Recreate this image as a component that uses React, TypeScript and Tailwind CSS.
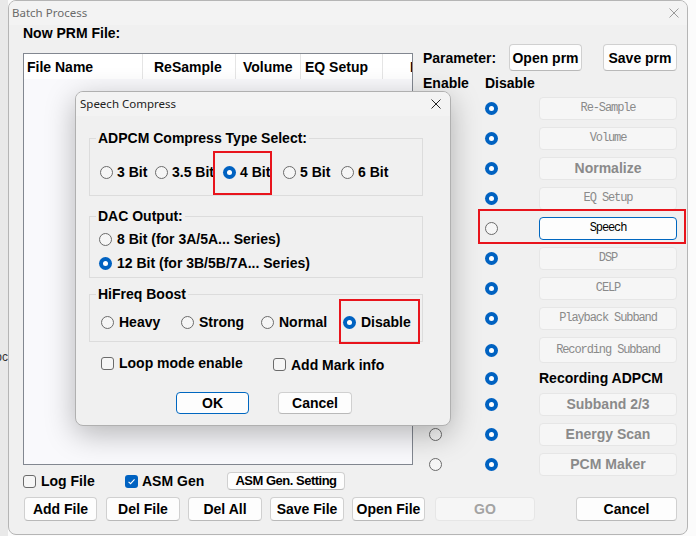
import React from "react";

type Kids = { children?: React.ReactNode };

function Radio({ checked }: { checked?: boolean }) {
  if (checked)
    return (
      <span className="w-[13px] h-[13px] rounded-full bg-[#0062c1] flex items-center justify-center shrink-0">
        <span className="w-[5px] h-[5px] rounded-full bg-white" />
      </span>
    );
  return <span className="w-[13px] h-[13px] rounded-full border border-[#6b6b6b] bg-[#f6f6f6] shrink-0" />;
}

function Check({ checked }: { checked?: boolean }) {
  if (checked)
    return (
      <span className="w-[13px] h-[13px] rounded-[3px] bg-[#0062c1] flex items-center justify-center shrink-0">
        <svg width="11" height="11" viewBox="0 0 12 12">
          <path d="M2.8 6.3l2.2 2.1 4.3-4.7" stroke="white" strokeWidth="1.2" fill="none" />
        </svg>
      </span>
    );
  return <span className="w-[13px] h-[13px] rounded-[3px] border border-[#6b6b6b] bg-[#f6f6f6] shrink-0" />;
}

function CloseX({ color }: { color: string }) {
  return (
    <svg width="10" height="10" viewBox="0 0 10 10" style={{ color }}>
      <path d="M0.5 0.5l9 9M9.5 0.5l-9 9" stroke="currentColor" strokeWidth="1" />
    </svg>
  );
}

function Btn({ children, className = "", disabled, focus }: Kids & { className?: string; disabled?: boolean; focus?: boolean }) {
  let look = "bg-[#fdfdfd] border-[#d0d0d0] border-b-[#b9b9b9] text-black";
  if (disabled) look = "bg-[#f6f6f6] border-[#e6e6e6] text-[#8a8a8a]";
  if (focus) look = "bg-[#fdfdfd] border-[#0067c0] text-black";
  return (
    <div className={`flex items-center justify-center rounded-[4px] border shrink-0 ${look} ${className}`}>{children}</div>
  );
}

// right side parameter rows
const rows: { label: string; mono?: boolean; on?: boolean; h: string; bh?: string; plain?: boolean }[] = [
  { label: "Re-Sample", mono: true, h: "h-[30px]" },
  { label: "Volume", mono: true, h: "h-[30px]" },
  { label: "Normalize", h: "h-[30px]" },
  { label: "EQ Setup", mono: true, h: "h-[30px]" },
  { label: "Speech", mono: true, on: true, h: "h-[30px]" },
  { label: "DSP", mono: true, h: "h-[30px]" },
  { label: "CELP", mono: true, h: "h-[30px]" },
  { label: "Playback Subband", mono: true, h: "h-[30px]" },
  { label: "Recording Subband", mono: true, h: "h-[34px]", bh: "h-[26px]" },
  { label: "Recording ADPCM", plain: true, h: "h-[22px]" },
  { label: "Subband 2/3", h: "h-[30px]" },
  { label: "Energy Scan", h: "h-[30px]" },
  { label: "PCM Maker", h: "h-[30px]" },
];

function ParamRow({ r }: { r: (typeof rows)[number] }) {
  return (
    <div className={`flex items-center ${r.h}`}>
      <div className="w-[62px] pl-[6px] flex">
        <Radio checked={r.on} />
      </div>
      <div className="w-[54px] flex">
        <Radio checked={!r.on} />
      </div>
      {r.plain ? (
        <span className="text-black">{r.label}</span>
      ) : (
        <Btn
          disabled={!r.on}
          focus={r.on}
          className={`w-[138px] ${r.bh ?? "h-[23px]"} ${
            r.mono ? "font-['Liberation_Mono',monospace] font-normal text-[12px] tracking-[-1.1px]" : ""
          } ${r.on ? "" : r.mono ? "text-[#6f6f6f]" : ""}`}
        >
          {r.label}
        </Btn>
      )}
    </div>
  );
}

function Group({ title, className = "", children }: Kids & { title: string; className?: string }) {
  return (
    <fieldset className={`w-[334px] border border-[#dcdcdc] ${className}`}>
      <legend className="ml-[6px] px-[2px] leading-[16px]">{title}</legend>
      {children}
    </fieldset>
  );
}

function Opt({ label, checked, className = "", gap = "gap-[4px]" }: { label: string; checked?: boolean; className?: string; gap?: string }) {
  return (
    <div className={`flex items-center ${gap} ${className}`}>
      <Radio checked={checked} />
      <span>{label}</span>
    </div>
  );
}

export default function App() {
  return (
    <div className="w-[696px] h-[536px] flex bg-[#fbfbfb] overflow-hidden relative font-['Liberation_Sans',Arial,sans-serif] font-bold text-[14px] text-black leading-[16px]">
      <div className="w-[8px] h-full bg-[#e9e9e9] relative overflow-hidden shrink-0">
        <span className="absolute right-0 top-[349px] font-normal text-[12px] text-[#333]">Doc</span>
      </div>

      {/* Batch Process window */}
      <div className="w-[680px] h-[535px] shrink-0 bg-[#f0f0f0] border border-[#b5b5b5] rounded-[8px] flex flex-col overflow-hidden">
        <div className="h-[24px] bg-[#f3f3f3] flex items-center justify-between pl-[3px] pr-[8px]">
          <span className="font-['Noto_Sans',sans-serif] font-normal text-[11.5px] text-[#6a6a6a]">Batch Process</span>
          <CloseX color="#9a9a9a" />
        </div>

        <div className="pl-[14px] flex flex-col">
          <div className="flex items-start">
            <div className="w-[390px] flex flex-col">
              <div className="h-[16px]">Now PRM File:</div>
              <div className="mt-[12px] h-[412px] border border-[#828790] bg-[#f9f9fc] flex flex-col">
                <div className="h-[25px] bg-white flex">
                  <div className="w-[118px] pl-[3px] flex items-center">File Name</div>
                  <div className="w-[93px] pl-[11px] flex items-center border-l border-[#e5e5e5]">ReSample</div>
                  <div className="w-[65px] pl-[7px] flex items-center border-l border-[#e5e5e5]">Volume</div>
                  <div className="w-[82px] pl-[4px] flex items-center border-l border-[#e5e5e5]">EQ Setup</div>
                  <div className="w-[30px] pl-[27px] flex items-center border-l border-[#e5e5e5] overflow-hidden">I</div>
                </div>
              </div>
              <div className="mt-[7px] h-[18px] flex items-center">
                <div className="w-[102px] flex items-center gap-[5px]">
                  <Check />
                  <span>Log File</span>
                </div>
                <div className="w-[102px] flex items-center gap-[4px]">
                  <Check checked />
                  <span>ASM Gen</span>
                </div>
                <Btn className="w-[118px] h-[18px] text-[13px] tracking-[-0.5px]">ASM Gen. Setting</Btn>
              </div>
            </div>

            <div className="ml-[10px] w-[254px] flex flex-col">
              <div className="mt-[19px] h-[27px] flex items-center">
                <span className="w-[87px]">Parameter:</span>
                <Btn className="w-[73px] h-[27px]">Open prm</Btn>
                <Btn className="ml-[21px] w-[74px] h-[27px]">Save prm</Btn>
              </div>
              <div className="mt-[4px] h-[16px] flex items-center">
                <span className="w-[62px]">Enable</span>
                <span>Disable</span>
              </div>
              <div className="mt-[2px] flex flex-col">
                {rows.map((r) => (
                  <ParamRow key={r.label} r={r} />
                ))}
              </div>
            </div>
          </div>

          <div className="mt-[7px] h-[24px] flex items-center">
            <Btn className="ml-[1px] w-[73px] h-[24px]">Add File</Btn>
            <Btn className="ml-[9px] w-[74px] h-[24px]">Del File</Btn>
            <Btn className="ml-[8px] w-[74px] h-[24px]">Del All</Btn>
            <Btn className="ml-[8px] w-[74px] h-[24px]">Save File</Btn>
            <Btn className="ml-[8px] w-[73px] h-[24px]">Open File</Btn>
            <Btn disabled className="ml-[10px] w-[100px] h-[24px] text-[#a3a3a3]">GO</Btn>
            <Btn className="ml-[41px] w-[101px] h-[24px]">Cancel</Btn>
          </div>
        </div>
      </div>

      <div className="flex-1 bg-[#fbfbfb]" />

      {/* Speech Compress dialog */}
      <div className="absolute left-[75px] top-[91px] w-[376px] h-[335px] bg-[#f0f0f0] border border-[#b0b0b0] rounded-[8px] shadow-[0_8px_30px_rgba(0,0,0,0.28)] flex flex-col overflow-hidden">
        <div className="h-[24px] bg-[#f3f3f3] flex items-center justify-between pl-[4px] pr-[9px]">
          <span className="font-['Noto_Sans',sans-serif] font-normal text-[11.5px] text-[#222]">Speech Compress</span>
          <CloseX color="#222" />
        </div>
        <div className="pl-[13px] flex flex-col">
          <Group title="ADPCM Compress Type Select:" className="mt-[14px]">
            <div className="mt-[18px] mb-[15px] h-[16px] pl-[10px] flex items-center">
              <Opt label="3 Bit" className="w-[55px]" />
              <Opt label="3.5 Bit" className="w-[68px]" />
              <Opt label="4 Bit" checked className="w-[60px]" />
              <Opt label="5 Bit" className="w-[58px]" />
              <Opt label="6 Bit" />
            </div>
          </Group>
          <Group title="DAC Output:" className="mt-[12px]">
            <div className="pl-[9px] pb-[6px] flex flex-col">
              <Opt label="8 Bit (for 3A/5A... Series)" gap="gap-[5px]" className="mt-[7px] h-[16px]" />
              <Opt label="12 Bit (for 3B/5B/7A... Series)" gap="gap-[5px]" checked className="mt-[8px] h-[16px]" />
            </div>
          </Group>
          <Group title="HiFreq Boost" className="mt-[8px]">
            <div className="mt-[12px] mb-[11px] h-[16px] pl-[11px] flex items-center">
              <Opt label="Heavy" gap="gap-[5px]" className="w-[80px]" />
              <Opt label="Strong" gap="gap-[5px]" className="w-[80px]" />
              <Opt label="Normal" gap="gap-[5px]" className="w-[82px]" />
              <Opt label="Disable" gap="gap-[5px]" checked />
            </div>
          </Group>
          <div className="mt-[13px] h-[16px] flex items-center">
            <div className="ml-[12px] w-[172px] flex items-center gap-[5px]">
              <Check />
              <span>Loop mode enable</span>
            </div>
            <div className="mt-[3px] flex items-center gap-[5px]">
              <Check />
              <span>Add Mark info</span>
            </div>
          </div>
          <div className="mt-[21px] flex">
            <Btn focus className="ml-[87px] w-[73px] h-[22px]">OK</Btn>
            <Btn className="ml-[29px] w-[74px] h-[22px]">Cancel</Btn>
          </div>
        </div>
      </div>

      {/* red markup boxes */}
      <div className="absolute left-[213px] top-[151px] w-[59px] h-[44px] border-2 border-[#e8141c]" />
      <div className="absolute left-[339px] top-[299px] w-[81px] h-[45px] border-2 border-[#e8141c]" />
      <div className="absolute left-[478px] top-[209px] w-[208px] h-[35px] border-2 border-[#e8141c]" />
    </div>
  );
}
